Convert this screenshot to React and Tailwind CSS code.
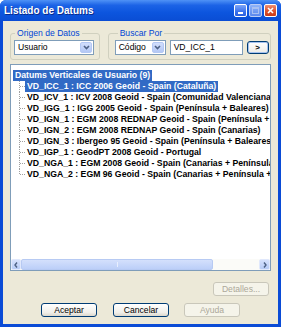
const items = [
  "VD_ICC_1 : ICC 2006 Geoid - Spain (Cataluña)",
  "VD_ICV_1 : ICV 2008 Geoid - Spain (Comunidad Valenciana)",
  "VD_IGG_1 : IGG 2005 Geoid - Spain (Península + Baleares)",
  "VD_IGN_1 : EGM 2008 REDNAP Geoid - Spain (Península + Baleares)",
  "VD_IGN_2 : EGM 2008 REDNAP Geoid - Spain (Canarias)",
  "VD_IGN_3 : Ibergeo 95 Geoid - Spain (Península + Baleares)",
  "VD_IGP_1 : GeodPT 2008 Geoid - Portugal",
  "VD_NGA_1 : EGM 2008 Geoid - Spain (Canarias + Península + Baleares)",
  "VD_NGA_2 : EGM 96 Geoid - Spain (Canarias + Península + Baleares)",
];

function Chevron() {
  return (
    <svg width="7" height="5" viewBox="0 0 7 5">
      <path d="M1 1 L3.5 3.5 L6 1" fill="none" stroke="#4D6185" strokeWidth="1.6" />
    </svg>
  );
}

function Combo({ text, width }) {
  return (
    <div className={`${width} h-[15px] flex items-stretch border border-[#7F9DB9] bg-white`}>
      <div className="flex-1 flex items-center pl-[3px] text-[8.6px] leading-none text-black">{text}</div>
      <div className="w-[12px] m-[1px] rounded-[2px] border border-[#B4C8F4] bg-[linear-gradient(to_bottom,#D2DEFC,#B3C8F5)] flex items-center justify-center">
        <Chevron />
      </div>
    </div>
  );
}

function XPButton({ children, disabled, className = "" }) {
  return (
    <div
      className={`h-[14px] w-[56px] rounded-[3px] border flex items-center justify-center text-[8.6px] leading-none ${
        disabled
          ? "border-[#C9C7BA] bg-[#F5F4EA] text-[#ACA899]"
          : "border-[#003C74] bg-[linear-gradient(to_bottom,#FFFFFF,#F0EFEA_70%,#DCD8CC)] text-black"
      } ${className}`}
    >
      {children}
    </div>
  );
}

function TreeLine({ last }) {
  return (
    <svg width="6" height="11" viewBox="0 0 6 11" className="shrink-0">
      <line x1="0.5" y1="0" x2="0.5" y2={last ? 5.5 : 11} stroke="#A0A0A0" strokeDasharray="1 1" />
      <line x1="1" y1="5.5" x2="6" y2="5.5" stroke="#A0A0A0" strokeDasharray="1 1" />
    </svg>
  );
}

export default function App() {
  return (
    <div className="w-[281px] h-[327px] flex flex-col bg-[#0A4BD6] rounded-t-[6px] overflow-hidden font-['Liberation_Sans',Arial,sans-serif]">
      {/* Title bar */}
      <div className="h-[21px] shrink-0 flex items-center justify-between pl-[4px] pr-[4px] bg-[linear-gradient(to_bottom,#4F92F6_0%,#1C63E6_25%,#0C55DE_60%,#0A4DD4_100%)]">
        <span className="text-white font-bold text-[10px] leading-none [text-shadow:1px_1px_0_#0A2B8C]">
          Listado de Datums
        </span>
        <div className="flex items-center gap-[2px]">
          <div className="w-[13px] h-[13px] rounded-[2px] border border-white bg-[linear-gradient(to_bottom,#7DA6F8,#3A71EC_60%,#2A5FE0)] flex items-end pb-[2px] pl-[3px]">
            <div className="w-[5px] h-[2px] bg-white" />
          </div>
          <div className="w-[13px] h-[13px] rounded-[2px] border border-[#B9CCF6] bg-[linear-gradient(to_bottom,#8EB2F8,#5A88EE)] flex items-center justify-center">
            <div className="w-[7px] h-[7px] border border-[#A9C0F2] border-t-2" />
          </div>
          <div className="w-[13px] h-[13px] rounded-[2px] border border-white bg-[linear-gradient(to_bottom,#EE9074,#DD512C_55%,#C93A17)] flex items-center justify-center">
            <svg width="7" height="7" viewBox="0 0 7 7">
              <path d="M1 1 L6 6 M6 1 L1 6" stroke="white" strokeWidth="1.6" />
            </svg>
          </div>
        </div>
      </div>

      {/* Body */}
      <div className="flex-1 mx-[3px] mb-[3px] bg-[#ECE9D8] flex flex-col px-[7px] pt-[7px]">
        <div className="flex gap-[8px]">
          <fieldset className="w-[90px] border border-[#D0D0BF] rounded-[3px] pl-[3px] pt-[2px] pb-[4px]">
            <legend className="ml-[1px] px-[2px] text-[8.6px] leading-[10px] text-[#0046D5]">Origen de Datos</legend>
            <Combo text="Usuario" width="w-[80px]" />
          </fieldset>
          <fieldset className="w-[164px] border border-[#D0D0BF] rounded-[3px] pl-[6px] pt-[2px] pb-[4px]">
            <legend className="ml-[3px] px-[2px] text-[8.6px] leading-[10px] text-[#0046D5]">Buscar Por</legend>
            <div className="flex items-center">
              <Combo text="Código" width="w-[51px]" />
              <div className="ml-[4px] w-[73px] h-[15px] border border-[#7F9DB9] bg-white flex items-center pl-[3px] text-[8.6px] leading-none text-black">
                VD_ICC_1
              </div>
              <div className="ml-[4px] w-[22px] h-[13px] rounded-[3px] border border-[#003C74] bg-[linear-gradient(to_bottom,#FFFFFF,#ECEBE6)] shadow-[inset_0_0_0_1px_#A6C2EE] flex items-center justify-center text-[8px] font-bold leading-none text-black">
                &gt;
              </div>
            </div>
          </fieldset>
        </div>

        {/* List */}
        <div className="mt-[4px] h-[207px] border border-[#7F9DB9] bg-white flex flex-col">
          <div className="flex-1 overflow-hidden pt-[5px] text-[8.7px] font-bold leading-[11px]">
            <div className="flex h-[11px] ml-[2px]">
              <span className="px-[2px] bg-[#316AC5] text-white whitespace-nowrap">Datums Verticales de Usuario (9)</span>
            </div>
            {items.map((t, i) => (
              <div key={t} className="flex h-[11px] ml-[8px]">
                <TreeLine last={i === items.length - 1} />
                <span className={`px-[2px] whitespace-nowrap ${i === 0 ? "bg-[#316AC5] text-white" : "text-black"}`}>{t}</span>
              </div>
            ))}
          </div>
          {/* Horizontal scrollbar */}
          <div className="h-[11px] shrink-0 flex bg-[#FBFBF8]">
            <div className="w-[10px] rounded-[2px] border border-[#E0E8FC] bg-[linear-gradient(to_bottom,#D6E2FD,#B7CBF6)] flex items-center justify-center">
              <svg width="4" height="6" viewBox="0 0 4 6"><path d="M3 0.5 L1 3 L3 5.5" fill="none" stroke="#4D6185" strokeWidth="1.4" /></svg>
            </div>
            <div className="w-[192px] rounded-[2px] border border-[#B7CAF3] bg-[linear-gradient(to_bottom,#D4E0FC,#BCCFF8)] flex items-center justify-center">
              <div className="w-[1px] h-[5px] bg-[#E8EFFE]" />
            </div>
            <div className="flex-1" />
            <div className="w-[11px] rounded-[2px] border border-[#E0E8FC] bg-[linear-gradient(to_bottom,#D6E2FD,#B7CBF6)] flex items-center justify-center">
              <svg width="4" height="6" viewBox="0 0 4 6"><path d="M1 0.5 L3 3 L1 5.5" fill="none" stroke="#4D6185" strokeWidth="1.4" /></svg>
            </div>
          </div>
        </div>

        <div className="mt-[11px] flex justify-end pr-[2px]">
          <XPButton disabled className="w-[54px]">Detalles...</XPButton>
        </div>
        <div className="mt-[7px] flex pl-[31px]">
          <XPButton>Aceptar</XPButton>
          <XPButton className="ml-[16px]">Cancelar</XPButton>
          <XPButton disabled className="ml-[15px]">Ayuda</XPButton>
        </div>
      </div>
    </div>
  );
}
